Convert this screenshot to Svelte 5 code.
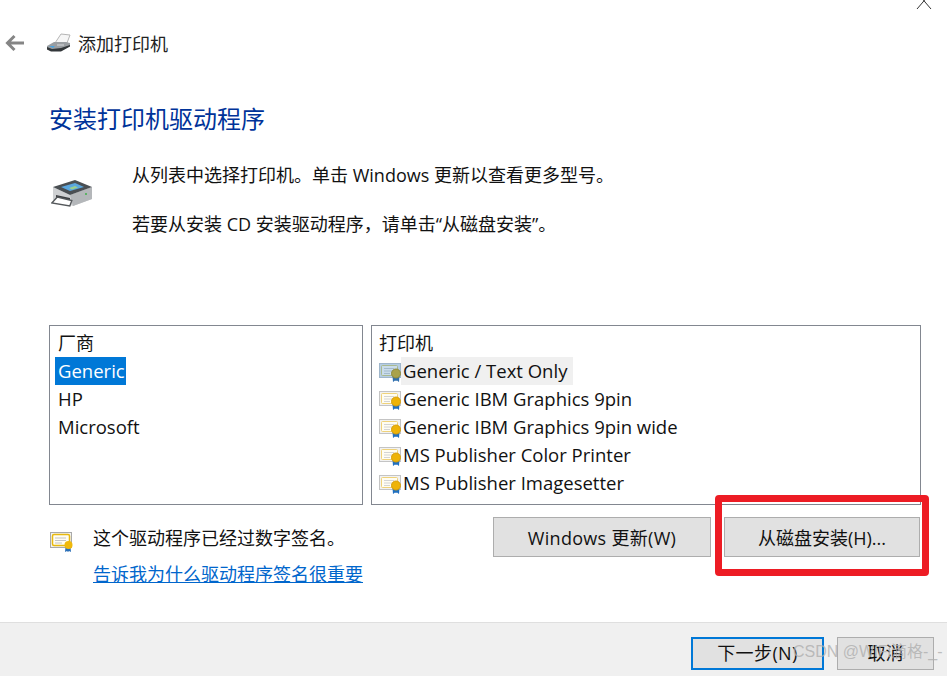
<script>
    const vendors = ['Generic', 'HP', 'Microsoft'];
    const printers = [
        'Generic / Text Only',
        'Generic IBM Graphics 9pin',
        'Generic IBM Graphics 9pin wide',
        'MS Publisher Color Printer',
        'MS Publisher Imagesetter'
    ];
</script>

{#snippet cert(dim)}
    <svg class="cert" width="24" height="24" viewBox="0 0 24 24">
        <rect x="0.5" y="4.500" width="21" height="14" fill={dim ? '#b5cde3' : '#f2f2f2'} stroke={dim ? '#9fb6cb' : '#c4c4c4'} />
        <rect x="2.500" y="6.500" width="16" height="10" rx="1" fill={dim ? '#c9dcea' : '#fffdf2'} stroke={dim ? '#a9b98f' : '#efd27a'} />
        <path d="M5 9.500h10M5 12h9M5 14.500h6" stroke={dim ? '#a3bacd' : '#d4d4d4'} fill="none" />
        <path d="M13.500 17l.5 6 2-1.500 1 .5 1-.5 2 1.500.5-6z" fill={dim ? '#2f6fae' : '#1f6fc0'} />
        <circle cx="17" cy="14.500" r="4.500" fill={dim ? '#a9a24a' : '#eeb308'} stroke={dim ? '#8f8a3e' : '#d69e0c'} />
    </svg>
{/snippet}

<div class="page">
    <svg class="close" width="20" height="10" viewBox="0 0 20 10">
        <path d="M2 9l6-7 1.500-2M16 9l-6-7-1.500-2" stroke="#333" fill="none" />
    </svg>

    <main class="content">
        <header class="nav">
            <svg class="back" width="20" height="18" viewBox="0 0 20 18">
                <path d="M20 9H3.500M10.500 2L3.500 9l7 7" stroke="#858585" stroke-width="3" fill="none" />
            </svg>
            <svg class="nav-icon" width="25" height="20" viewBox="0 0 25 20">
                <path d="M9 10L15 1l9 1-3 8z" fill="#f6f6f6" stroke="#b5b5b5" />
                <path d="M1 13l7-4h12l4 1v3l-9 5H5l-4-2z" fill="#9a9ea2" />
                <path d="M1 14l5 2 9-1 9-3v1.500l-9 5H5l-4-2z" fill="#33373a" />
                <path d="M3 13h6l-2 2z" fill="#4aa3df" />
                <path d="M11 12h7" stroke="#d8dadc" fill="none" />
            </svg>
            <span class="nav-title">添加打印机</span>
        </header>

        <h1>安装打印机驱动程序</h1>

        <section class="intro">
            <svg class="intro-icon" width="43" height="30" viewBox="0 0 43 30">
                <path d="M2 8l17 8 22-8v12l-19 7-20-6z" fill="#cfd1d3" />
                <path d="M19 16l22-8v12l-19 7z" fill="#b4b7ba" />
                <path d="M2 8L24 1l17 7-22 8z" fill="#4a4f53" />
                <path d="M10 8l14-4 9 4-14 4z" fill="#5ba7df" />
                <path d="M18 9l6-2 3 1.500-6 2z" fill="#9ccf8c" />
                <path d="M5 16l14 3v3L5 19z" fill="#3b3e41" />
                <path d="M0.800 24l5.500-6 14.500 3.500-2 5.500z" fill="#fff" stroke="#54585b" stroke-width="1.400" />
                <circle cx="35" cy="15" r="1" fill="#3fb04a" />
            </svg>
            <div class="intro-text">
                <p>从列表中选择打印机。单击 Windows 更新以查看更多型号。</p>
                <p>若要从安装 CD 安装驱动程序，请单击“从磁盘安装”。</p>
            </div>
        </section>

        <section class="lists">
            <div class="listbox">
                <div class="list-head">厂商</div>
                {#each vendors as v, i}
                    <div class="row"><span class:selected={i === 0}>{v}</span></div>
                {/each}
            </div>
            <div class="listbox printers">
                <div class="list-head">打印机</div>
                {#each printers as p, i}
                    <div class="row">
                        {@render cert(i === 0)}
                        <span class:focus={i === 0}>{p}</span>
                    </div>
                {/each}
            </div>
        </section>

        <section class="actions">
            <svg class="sign-icon" width="24" height="22" viewBox="0 0 24 22">
                <rect x="0.5" y="1.500" width="21" height="15" fill="#f2f2f2" stroke="#a9a9a9" />
                <rect x="2.500" y="3.500" width="17" height="11" rx="1.500" fill="#fffdf2" stroke="#e8b90e" stroke-width="1.500" />
                <path d="M5 7h11M5 9.500h11M5 12h7" stroke="#c4c4c4" fill="none" />
                <path d="M15.500 16l-.5 5 2-1 1 1 1-1 2 1-.5-5z" fill="#2a6fb8" />
                <circle cx="18.500" cy="14" r="4" fill="#f0b90b" />
            </svg>
            <div class="sign">
                <div>这个驱动程序已经过数字签名。</div>
                <a href="#why">告诉我为什么驱动程序签名很重要</a>
            </div>
            <button class="update">Windows 更新(W)</button>
            <button class="disk">从磁盘安装(H)...</button>
        </section>
    </main>

    <footer>
        <button class="next">下一步(N)</button>
        <button class="cancel">取消</button>
    </footer>

    <div class="redbox"></div>
    <div class="watermark">CSDN @WiFi滴格-_-</div>
</div>

<style>
    :global(body) {
        margin: 0;
        background: #fff;
    }
    .page {
        position: relative;
        display: flex;
        flex-direction: column;
        width: 947px;
        height: 676px;
        overflow: hidden;
        color: #111;
        font-family: "Open Sans", "Noto Sans CJK SC", sans-serif;
        font-size: 18px;
    }
    .close {
        position: absolute;
        top: 0;
        left: 915px;
    }
    .content {
        flex: 1;
    }
    .nav {
        display: flex;
        align-items: center;
        height: 24px;
        padding: 31px 0 0 4px;
    }
    .nav-icon {
        margin-left: 22px;
    }
    .nav-title {
        margin-left: 7px;
        color: #222;
    }
    h1 {
        margin: 47px 0 0 49px;
        color: #003399;
        font-size: 24px;
        font-weight: 400;
        line-height: 34px;
    }
    .intro {
        display: flex;
        margin-top: 27px;
        padding-left: 50px;
        height: 162px;
    }
    .intro-icon {
        margin: 16px 0 0 1px;
    }
    .intro-text {
        margin-left: 38px;
    }
    .intro p {
        margin: 0 0 24px;
        line-height: 25px;
    }
    .lists {
        display: grid;
        grid-template-columns: 314px 550px;
        gap: 8px;
        padding-left: 49px;
    }
    .listbox {
        box-sizing: border-box;
        height: 180px;
        padding: 3px 0 0 5px;
        border: 1px solid #828790;
    }
    .list-head {
        height: 28px;
        line-height: 28px;
        padding-left: 3px;
    }
    .row {
        display: flex;
        align-items: center;
        height: 28px;
        line-height: 28px;
        font-size: 18.5px;
    }
    .row span {
        padding: 0 1px 0 3px;
    }
    .row .selected {
        background: #0078d7;
        color: #fff;
    }
    .printers .list-head {
        padding-left: 2px;
    }
    .printers .row {
        padding-left: 2px;
    }
    .cert {
        flex: none;
        margin-right: -2px;
    }
    .printers .row span {
        padding: 0 6px 0 2px;
    }
    .row .focus {
        background: #f0f0f0;
    }
    .actions {
        display: flex;
        align-items: flex-start;
        margin-top: 12px;
        padding-left: 50px;
    }
    .sign-icon {
        margin-top: 14px;
    }
    .sign {
        width: 400px;
        margin-left: 19px;
        padding-top: 9px;
        line-height: 25px;
    }
    .sign a {
        display: block;
        margin-top: 11px;
        color: #0066cc;
    }
    button {
        box-sizing: border-box;
        padding: 0;
        border: 1px solid #adadad;
        background: #e1e1e1;
        color: #111;
        font: inherit;
    }
    .update {
        width: 218px;
        height: 40px;
        letter-spacing: 0.3px;
    }
    .disk {
        width: 196px;
        height: 40px;
        margin-left: 13px;
    }
    footer {
        display: flex;
        box-sizing: border-box;
        height: 54px;
        padding: 14px 0 0 691px;
        background: #f0f0f0;
        border-top: 1px solid #dfdfdf;
    }
    footer button {
        height: 33px;
        padding-bottom: 3px;
    }
    .next {
        width: 133px;
        border: 2px solid #0078d7;
        letter-spacing: 0.4px;
    }
    .cancel {
        width: 97px;
        margin-left: 13px;
    }
    .redbox {
        position: absolute;
        left: 715px;
        top: 495px;
        box-sizing: border-box;
        width: 214px;
        height: 81px;
        border: 7px solid #ed1c24;
        border-radius: 4px;
    }
    .watermark {
        position: absolute;
        left: 793px;
        top: 642px;
        color: rgba(175, 175, 175, 0.8);
        font-family: "Liberation Sans", "Noto Sans CJK SC", sans-serif;
        font-size: 16px;
        line-height: 20px;
        white-space: nowrap;
    }
</style>
